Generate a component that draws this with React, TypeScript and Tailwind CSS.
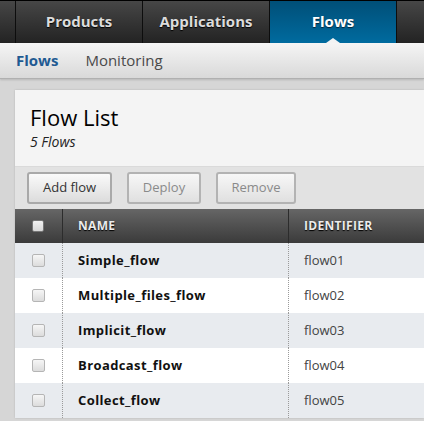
import React from "react";

const TABS = ["Products", "Applications", "Flows", "Admin"] as const;
const FLOWS = [
  { name: "Simple_flow", id: "flow01" },
  { name: "Multiple_files_flow", id: "flow02" },
  { name: "Implicit_flow", id: "flow03" },
  { name: "Broadcast_flow", id: "flow04" },
  { name: "Collect_flow", id: "flow05" },
];

function Checkbox({ header }: { header?: boolean }) {
  if (header) {
    return <div className="h-[12px] w-[12px] rounded-[2px] border border-[#777] bg-gradient-to-b from-[#f2f2f2] to-[#d8d8d8]" />;
  }
  return <div className="h-[13px] w-[13px] rounded-[2px] border border-[#b5b5b5] bg-gradient-to-b from-[#f6f6f6] to-[#dcdcdc]" />;
}

export default function App() {
  return (
    <div className="h-[421px] w-[424px] overflow-hidden bg-[#d6d6d6] font-['Open_Sans',sans-serif]">
      {/* top nav */}
      <div className="flex h-[43px] border-t border-black bg-gradient-to-b from-[#474747] to-[#232323]">
        <div className="w-[15px] shrink-0" />
        {TABS.map((t) => {
          const active = t === "Flows";
          return (
            <div
              key={t}
              className={
                "relative flex w-[127px] shrink-0 items-center justify-center border-l border-[#0d0d0d] pb-[1px] text-[15px] font-bold " +
                (active
                  ? "bg-gradient-to-b from-[#004f78] to-[#006b9f] text-white [text-shadow:0_1px_1px_#00253a]"
                  : "text-[#dcdcdc] [text-shadow:0_1px_1px_#000]")
              }
            >
              {t}
              {active && (
                <div className="absolute bottom-0 left-1/2 -ml-[7px] h-0 w-0 border-x-[7px] border-b-[5px] border-x-transparent border-b-[#f3f3f3]" />
              )}
            </div>
          );
        })}
      </div>

      {/* sub nav */}
      <div className="flex h-[36px] items-center gap-[27px] border-b border-[#b0b0b0] bg-gradient-to-b from-[#f5f5f5] to-[#d9d9d9] pl-[16px] pb-[1px] text-[15px] shadow-[0_1px_2px_rgba(0,0,0,0.15)]">
        <span className="font-bold text-[#1f5a92]">Flows</span>
        <span className="text-[#4a4a4a]">Monitoring</span>
      </div>

      {/* panel */}
      <div className="pl-[15px] pt-[11px]">
        <div className="shadow-[0_0_2px_rgba(0,0,0,0.15)]">
          <div className="h-[77px] border-b border-[#dadada] bg-[#f4f4f4] pl-[15px] pt-[12px]">
            <div className="text-[22px] leading-[30px] text-black">Flow List</div>
            <div className="text-[14px] italic leading-[20px] text-[#222]">5 Flows</div>
          </div>

          <div className="flex h-[42px] items-center gap-[15px] bg-[#e2e2e2] pl-[12px]">
            <button className="h-[32px] w-[85px] rounded-[3px] border-2 border-[#a9a9a9] bg-gradient-to-b from-[#fafafa] to-[#dcdcdc] text-[13px] text-[#333]">
              Add flow
            </button>
            <button className="h-[32px] w-[74px] rounded-[3px] border-2 border-[#b3b3b3] bg-gradient-to-b from-[#f7f7f7] to-[#e0e0e0] text-[13px] text-[#8a8a8a]">
              Deploy
            </button>
            <button className="h-[32px] w-[80px] rounded-[3px] border-2 border-[#b3b3b3] bg-gradient-to-b from-[#f7f7f7] to-[#e0e0e0] text-[13px] text-[#8a8a8a]">
              Remove
            </button>
          </div>

          {/* table */}
          <div className="flex h-[34px] bg-gradient-to-b from-[#666666] to-[#3b3b3b] text-[12px] font-bold tracking-[0.3px] text-[#ececec] [text-shadow:0_1px_1px_#000]">
            <div className="flex w-[48px] shrink-0 items-center justify-center border-r border-[#2c2c2c] pr-[1px]">
              <Checkbox header />
            </div>
            <div className="flex w-[226px] shrink-0 items-center border-r border-[#2c2c2c] pl-[15px]">NAME</div>
            <div className="flex flex-1 items-center pl-[15px]">IDENTIFIER</div>
          </div>

          {FLOWS.map((f, i) => (
            <div key={f.id} className={"flex h-[35px] text-[13px] " + (i % 2 === 0 ? "bg-[#e8ebef]" : "bg-white")}>
              <div className="flex w-[48px] shrink-0 items-center justify-center border-r border-dotted border-[#9a9a9a]">
                <Checkbox />
              </div>
              <div className="flex w-[226px] shrink-0 items-center border-r border-dotted border-[#9a9a9a] pl-[15px] pt-[1px] font-bold tracking-[0.4px] text-[#111]">
                {f.name}
              </div>
              <div className="flex flex-1 items-center pl-[15px] pt-[1px] text-[#444]">{f.id}</div>
            </div>
          ))}
        </div>
      </div>
    </div>
  );
}
